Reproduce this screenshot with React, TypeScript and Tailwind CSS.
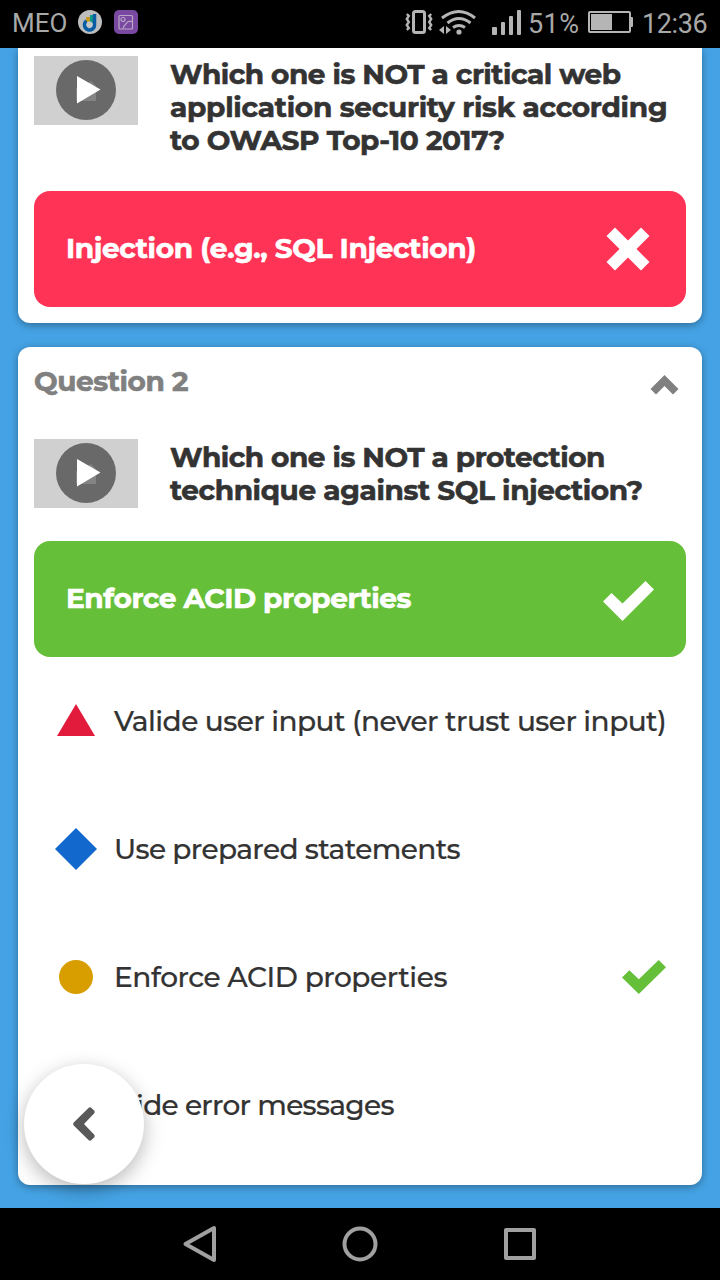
import type { ReactNode } from "react";

function Thumb() {
  return (
    <div className="flex h-[69px] w-[104px] shrink-0 justify-center bg-[#d0d0d0] pt-1">
      <svg width="60" height="60" viewBox="0 0 60 60">
        <circle cx="30" cy="30" r="30" fill="#696969" />
        <path d="M20 28h3l12-7 5 5v15H20z" fill="#838383" />
        <path d="M21 16v27.500L44.500 29.500z" fill="#fff" />
      </svg>
    </div>
  );
}

function Check({ width, height, color }: { width: number; height: number; color: string }) {
  return (
    <svg width={width} height={height} viewBox="0 0 51 40" preserveAspectRatio="none">
      <path d="M0 20.500 8.500 12 19.500 22.500 42.500 0 51 8.500 19.500 40z" fill={color} />
    </svg>
  );
}

function Option({ icon, children, mark }: { icon: ReactNode; children: ReactNode; mark?: ReactNode }) {
  return (
    <li className="flex h-32 items-center">
      <span className="ml-5 mr-4 flex w-11 shrink-0 justify-center">{icon}</span>
      <span className="grow whitespace-nowrap text-[28px] font-medium leading-[33px] [-webkit-text-stroke:0.2px]">{children}</span>
      {mark}
    </li>
  );
}

function StatusBar() {
  return (
    <header className="flex h-12 shrink-0 items-center bg-black font-['Roboto',sans-serif] text-[27px] leading-none text-[#a8a8a8]">
      <span className="ml-3 mt-[-2px] w-[56px] whitespace-nowrap text-[26px]">MEO</span>
      <svg className="ml-[10px] mt-[-4px]" width="24" height="24" viewBox="0 0 24 24">
        <circle cx="12" cy="12" r="12" fill="#bdbdbd" />
        <path d="M8 7h4v6H8z" fill="#c69c20" />
        <path d="M12 5h3v8h-3z" fill="#109a84" />
        <path d="M16.500 4v10.500a5 5 0 1 1-8-3.500" fill="none" stroke="#075da5" strokeWidth="3.500" />
        <circle cx="11.500" cy="14.500" r="3" fill="#c5c9cc" />
      </svg>
      <svg className="ml-3 mt-[-4px]" width="24" height="24" viewBox="0 0 24 24">
        <rect width="24" height="24" rx="5" fill="#7948a0" />
        <g fill="none" stroke="#b9a8c8" strokeWidth="1.200">
          <rect x="5" y="5.500" width="13.500" height="13.500" rx="1" />
          <circle cx="9" cy="9.500" r="2" />
          <path d="M9 18.500c1-4 3-4 4-6s3-1 5.500-1" />
        </g>
      </svg>
      <svg className="ml-auto mt-[-2px]" width="124" height="28" viewBox="404 9 124 28" fill="none" stroke="#b5b5b5">
        <rect x="413.500" y="11.500" width="11" height="21" rx="2" strokeWidth="3" />
        <path d="M406.800 14l2 2-2 3 2 3-2 3 2 3-2 2M431.200 14l-2 2 2 3-2 3 2 3-2 3 2 2" strokeWidth="2.400" />
        <g strokeWidth="3">
          <path d="M442 18q17-13 33 0" />
          <path d="M447.500 23q11.500-9 23 0" />
          <path d="M453 27.500q6-4 12 0" />
        </g>
        <circle cx="459" cy="32" r="2.600" fill="#b5b5b5" stroke="none" />
        <path d="M444 26v8l-5-4zM446 26v8l5-4z" fill="#b5b5b5" stroke="none" />
        <g fill="#b5b5b5" stroke="none">
          <rect x="492" y="27" width="5" height="8" rx="1" />
          <rect x="501" y="22" width="4" height="13" rx="1" />
          <rect x="509" y="16" width="4" height="19" rx="1" />
          <rect x="517" y="10" width="4" height="25" rx="1" />
        </g>
      </svg>
      <span className="w-[60px] whitespace-nowrap tracking-[0.4px]">51%</span>
      <svg className="mt-[-4px]" width="46" height="22" viewBox="0 0 46 22">
        <rect x="1" y="1" width="41" height="20" rx="1" fill="none" stroke="#b5b5b5" strokeWidth="2" />
        <rect x="3" y="3" width="21" height="16" fill="#b5b5b5" />
        <rect x="42" y="6" width="3" height="10" rx="1" fill="#b5b5b5" />
      </svg>
      <span className="ml-2 w-[78px] whitespace-nowrap tracking-[-0.4px]">12:36</span>
    </header>
  );
}

export default function App() {
  return (
    <div className="relative flex h-[1280px] w-[720px] flex-col overflow-hidden bg-[#45a3e5] font-['Montserrat','Inter',sans-serif] text-[#333333]">
      <StatusBar />
      <main className="flex grow flex-col gap-6 px-[18px]">
        <section className="h-[275px] rounded-b-xl bg-white px-4 pt-2 shadow-[0_2px_8px_rgba(0,0,0,0.35)]">
          <div className="flex h-[135px] gap-8">
            <Thumb />
            <h2 className="whitespace-nowrap pt-[2px] text-[28px] font-bold leading-[33px] [-webkit-text-stroke:0.6px]">
              <span className="block tracking-[-0.48px]">Which one is NOT a critical web</span>
              <span className="block tracking-[-0.26px]">application security risk according</span>
              <span className="block tracking-[-0.38px]">to OWASP Top-10 2017?</span>
            </h2>
          </div>
          <div className="flex h-[116px] items-center justify-between rounded-2xl bg-[#ff3355] pl-8 pr-9 text-[28px] font-bold text-white [-webkit-text-stroke:0.6px]">
            <span className="whitespace-nowrap pb-0.5 tracking-[-0.36px]">Injection (e.g., SQL Injection)</span>
            <svg width="44" height="44" viewBox="0 0 44 44">
              <path d="M9 .5 22 13.500 35 .5 43.500 9 30.500 22 43.500 35 35 43.500 22 30.500 9 43.500 .5 35 13.500 22 .5 9z" fill="#fff" />
            </svg>
          </div>
        </section>
        <section className="h-[838px] rounded-xl bg-white px-4 shadow-[0_2px_8px_rgba(0,0,0,0.35)]">
          <div className="flex h-[92px] justify-between pr-[7px] pt-[18px] text-[28px] font-bold leading-[33px] text-[#808080] [-webkit-text-stroke:0.6px]">
            <span className="tracking-[-0.4px]">Question 2</span>
            <svg className="mt-[10px]" width="29" height="20" viewBox="0 0 29 20">
              <path d="M14.500 0 28.500 14 23 19.500 14.500 11 6 19.500 .5 14z" fill="#808080" />
            </svg>
          </div>
          <div className="flex h-[102px] gap-8">
            <Thumb />
            <h2 className="whitespace-nowrap pt-[2px] text-[28px] font-bold leading-[33px] [-webkit-text-stroke:0.6px]">
              <span className="block tracking-[-0.48px]">Which one is NOT a protection</span>
              <span className="block tracking-[-0.38px]">technique against SQL injection?</span>
            </h2>
          </div>
          <div className="flex h-[116px] items-center justify-between rounded-2xl bg-[#66bf39] pl-8 pr-8 text-[28px] font-bold text-white [-webkit-text-stroke:0.6px]">
            <span className="whitespace-nowrap pb-0.5 tracking-[-0.42px]">Enforce ACID properties</span>
            <span className="pt-[3px]"><Check width={51} height={40} color="#fff" /></span>
          </div>
          <ul>
            <Option icon={<svg className="mb-0.5" width="38" height="32" viewBox="0 0 38 32"><path d="M19 0 38 32H0z" fill="#e21b3c" /></svg>}>
              <span className="tracking-[-0.54px]">Valide user input (never trust user input)</span>
            </Option>
            <Option icon={<svg width="42" height="42" viewBox="0 0 42 42"><path d="M21 0 42 21 21 42 0 21z" fill="#1368ce" /></svg>}>
              <span className="tracking-[-0.62px]">Use prepared statements</span>
            </Option>
            <Option
              icon={<span className="size-[34px] rounded-full bg-[#d89e00]" />}
              mark={<span className="mr-5"><Check width={44} height={34} color="#66bf39" /></span>}
            >
              <span className="tracking-[-0.44px]">Enforce ACID properties</span>
            </Option>
            <Option icon={<span className="size-8 bg-[#26890c]" />}>
              <span className="tracking-[-0.68px]">Hide error messages</span>
            </Option>
          </ul>
        </section>
      </main>
      <button
        aria-label="Back"
        className="absolute left-6 top-[1064px] flex size-[120px] items-center justify-center rounded-full bg-white shadow-[0_6px_20px_rgba(0,0,0,0.28)]"
      >
        <svg width="24" height="36" viewBox="0 0 24 36">
          <path d="M16.500 2 1.700 16.500q-1.200 1.500 0 3L16.500 34q1.500 1.300 3 0l2.800-2.800q1-1.200 0-2.400L12 18 22.300 7.200q1-1.200 0-2.400L19.500 2q-1.500-1.300-3 0z" fill="#595959" />
        </svg>
      </button>
      <nav className="flex h-[72px] shrink-0 items-center justify-center gap-[124px] bg-black">
        <svg width="36" height="40" viewBox="0 0 36 40" fill="none" stroke="#a0a0a0" strokeWidth="4" strokeLinejoin="round">
          <path d="M32 4v32L3.500 20z" />
        </svg>
        <svg width="36" height="36" viewBox="0 0 36 36" fill="none" stroke="#a0a0a0" strokeWidth="4">
          <circle cx="18" cy="18" r="15.500" />
        </svg>
        <svg width="36" height="36" viewBox="0 0 36 36" fill="none" stroke="#a0a0a0" strokeWidth="4" strokeLinejoin="round">
          <rect x="4" y="4" width="28" height="28" />
        </svg>
      </nav>
    </div>
  );
}
